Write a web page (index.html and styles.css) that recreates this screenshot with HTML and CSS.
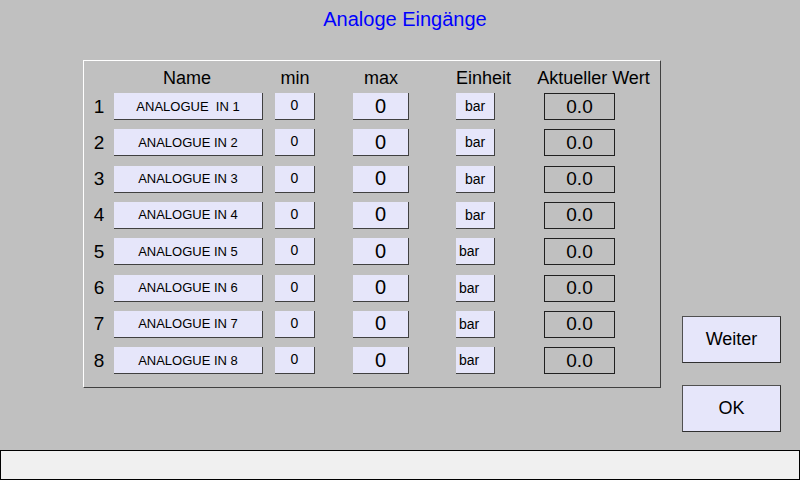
FILE: index.html
```html
<!DOCTYPE html>
<html lang="de">
<head>
    <meta charset="UTF-8">
    <title>Analoge Eingänge</title>
    <link rel="stylesheet" href="styles.css">
</head>
<body>
    <div class="screen">
        <h1 class="title">Analoge Eingänge</h1>
        <div class="main">
            <div class="panel">
                <div class="row head">
                    <span></span>
                    <span class="h h-name">Name</span>
                    <span class="h h-min">min</span>
                    <span class="h h-max">max</span>
                    <span class="h h-unit">Einheit</span>
                    <span class="h h-value">Aktueller Wert</span>
                </div>
                <div class="rows">
                    <div class="row"><span class="num">1</span><span class="cell name">ANALOGUE  IN 1</span><span class="cell min">0</span><span class="cell max">0</span><span class="cell unit">bar</span><span class="value">0.0</span></div>
                    <div class="row"><span class="num">2</span><span class="cell name">ANALOGUE IN 2</span><span class="cell min">0</span><span class="cell max">0</span><span class="cell unit">bar</span><span class="value">0.0</span></div>
                    <div class="row"><span class="num">3</span><span class="cell name">ANALOGUE IN 3</span><span class="cell min">0</span><span class="cell max">0</span><span class="cell unit">bar</span><span class="value">0.0</span></div>
                    <div class="row"><span class="num">4</span><span class="cell name">ANALOGUE IN 4</span><span class="cell min">0</span><span class="cell max">0</span><span class="cell unit">bar</span><span class="value">0.0</span></div>
                    <div class="row"><span class="num">5</span><span class="cell name">ANALOGUE IN 5</span><span class="cell min">0</span><span class="cell max">0</span><span class="cell unit left">bar</span><span class="value">0.0</span></div>
                    <div class="row"><span class="num">6</span><span class="cell name">ANALOGUE IN 6</span><span class="cell min">0</span><span class="cell max">0</span><span class="cell unit left">bar</span><span class="value">0.0</span></div>
                    <div class="row"><span class="num">7</span><span class="cell name">ANALOGUE IN 7</span><span class="cell min">0</span><span class="cell max">0</span><span class="cell unit left">bar</span><span class="value">0.0</span></div>
                    <div class="row"><span class="num">8</span><span class="cell name">ANALOGUE IN 8</span><span class="cell min">0</span><span class="cell max">0</span><span class="cell unit left">bar</span><span class="value">0.0</span></div>
                </div>
            </div>
            <div class="side">
                <button class="btn">Weiter</button>
                <button class="btn">OK</button>
            </div>
        </div>
        <div class="status"></div>
    </div>
</body>
</html>
```

FILE: styles.css
```css
* { box-sizing: border-box; margin: 0; padding: 0; }
body { background: #c0c0c0; font-family: 'Liberation Sans', Arial, sans-serif; color: #000; }
.screen { width: 800px; height: 480px; display: flex; flex-direction: column; }
.title { height: 40px; font-size: 20px; font-weight: normal; color: #0000ff; text-align: center; line-height: 38px; padding-left: 10px; }
.main { flex: 1; display: flex; padding-left: 83px; }
.panel { margin-top: 20px; width: 578px; height: 328px; border: 1px solid; border-color: #fff #404040 #404040 #fff; padding-top: 5px; }
.row { display: grid; grid-template-columns: 30px 161px 78px 103px 88px 71px; align-items: center; }
.head { height: 24px; margin-bottom: 3px; }
.h { font-size: 18px; text-align: center; white-space: nowrap; line-height: 24px; }
.h-name { width: 146px; }
.h-min { width: 40px; }
.h-max { width: 56px; }
.h-unit { width: 39px; }
.h-value { width: 119px; margin-left: -10px; }
.rows { display: flex; flex-direction: column; gap: 9.33px; }
.num { font-size: 19px; text-align: center; line-height: 24px; }
.cell { height: 27px; background: #e6e6fa; border-right: 1px solid #404040; border-bottom: 1px solid #404040; display: flex; align-items: center; justify-content: center; }
.cell.name { width: 149px; font-size: 13px; white-space: pre; }
.cell.min { width: 40px; font-size: 14px; padding-bottom: 2px; }
.cell.max { width: 56px; font-size: 20px; }
.cell.unit { width: 39px; font-size: 14px; }
.cell.unit.left { justify-content: flex-start; padding-left: 3px; }
.value { width: 71px; height: 27px; border: 1px solid #202020; font-size: 19px; display: flex; align-items: center; justify-content: center; }
.side { margin-left: 21px; padding-top: 276px; display: flex; flex-direction: column; gap: 22px; }
.btn { width: 99px; height: 47px; background: #e6e6fa; border: 1px solid; border-color: #505050 #303030 #303030 #505050; font-family: inherit; font-size: 18px; color: #000; }
.status { height: 30px; background: #f0f0f0; border: 1px solid #000; }
```
